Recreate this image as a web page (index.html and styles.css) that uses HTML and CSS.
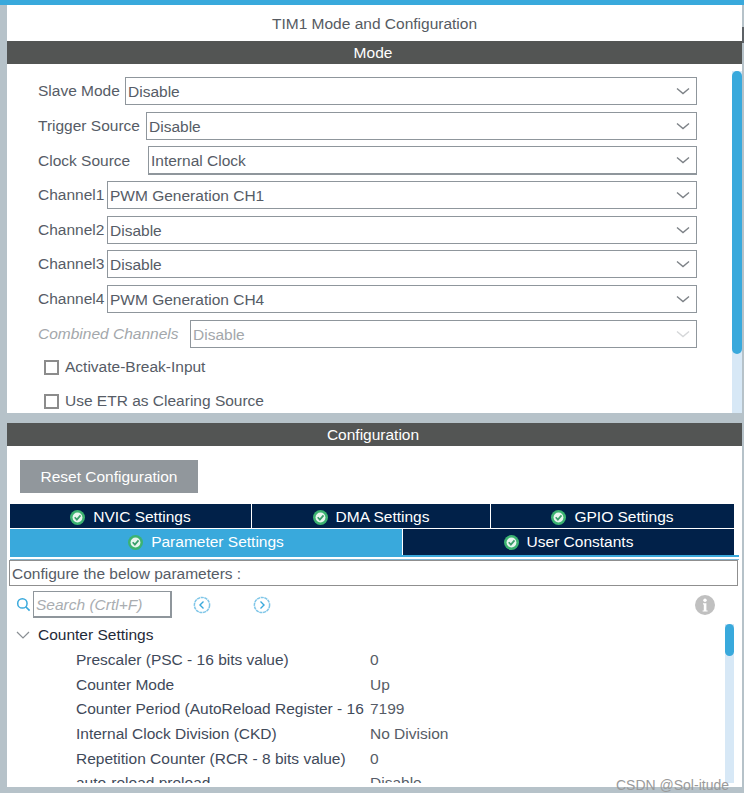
FILE: index.html
```html
<!DOCTYPE html>
<html lang="en">
<head>
<meta charset="utf-8">
<title>TIM1 Mode and Configuration</title>
<link rel="stylesheet" href="styles.css">
</head>
<body>
<svg class="defs" width="0" height="0" aria-hidden="true">
  <symbol id="chev" viewBox="0 0 14 8"><path d="M1 1.5 7 6.5 13 1.5" fill="none" stroke="currentColor" stroke-width="1.4"/></symbol>
  <symbol id="ok" viewBox="0 0 14 14"><circle cx="7" cy="7" r="7" fill="#3cb371"/><circle cx="7" cy="7" r="4.6" fill="#e8f5ee"/><path d="M4.4 6.8 6.4 9 9.8 5" fill="none" stroke="#3a9e6a" stroke-width="1.6"/></symbol>
</svg>
<div class="app">
  <div class="window">
    <h1 class="title">TIM1 Mode and Configuration</h1>
    <h2 class="bar">Mode</h2>
    <section class="mode">
      <div class="mode-list">
        <div class="row r1"><span class="lbl">Slave Mode</span><div class="sel s-slave">Disable<svg class="chev"><use href="#chev"/></svg></div></div>
        <div class="row r2"><span class="lbl">Trigger Source</span><div class="sel s-trig">Disable<svg class="chev"><use href="#chev"/></svg></div></div>
        <div class="row r3"><span class="lbl">Clock Source</span><div class="sel s-clock">Internal Clock<svg class="chev"><use href="#chev"/></svg></div></div>
        <div class="row r4"><span class="lbl">Channel1</span><div class="sel s-ch">PWM Generation CH1<svg class="chev"><use href="#chev"/></svg></div></div>
        <div class="row r5"><span class="lbl">Channel2</span><div class="sel s-ch">Disable<svg class="chev"><use href="#chev"/></svg></div></div>
        <div class="row r6"><span class="lbl">Channel3</span><div class="sel s-ch">Disable<svg class="chev"><use href="#chev"/></svg></div></div>
        <div class="row r7"><span class="lbl">Channel4</span><div class="sel s-ch">PWM Generation CH4<svg class="chev"><use href="#chev"/></svg></div></div>
        <div class="row r8 off"><span class="lbl">Combined Channels</span><div class="sel s-comb">Disable<svg class="chev"><use href="#chev"/></svg></div></div>
        <label class="check c1"><span class="box"></span>Activate-Break-Input</label>
        <label class="check c2"><span class="box"></span>Use ETR as Clearing Source</label>
      </div>
      <div class="track track-mode"><div class="thumb thumb-mode"></div></div>
    </section>
    <div class="gap"></div>
    <h2 class="bar">Configuration</h2>
    <section class="config">
      <div class="reset-wrap"><button class="reset" type="button">Reset Configuration</button></div>
      <div class="tabs t-top">
        <div class="tab t1"><svg class="ok"><use href="#ok"/></svg>NVIC Settings</div>
        <div class="tab t2"><svg class="ok"><use href="#ok"/></svg>DMA Settings</div>
        <div class="tab t3"><svg class="ok"><use href="#ok"/></svg>GPIO Settings</div>
      </div>
      <div class="tabs t-bot">
        <div class="tab active"><svg class="ok"><use href="#ok"/></svg>Parameter Settings</div>
        <div class="tab user"><svg class="ok"><use href="#ok"/></svg>User Constants</div>
      </div>
      <div class="rule"></div>
      <div class="hint">Configure the below parameters :</div>
      <div class="tools">
        <svg class="search-ico" viewBox="0 0 16 16"><circle cx="6.8" cy="6.8" r="5" fill="none" stroke="#39a9dc" stroke-width="1.6"/><path d="M10.4 10.4 14.5 14.5" stroke="#39a9dc" stroke-width="1.8"/></svg>
        <div class="search">Search (Crtl+F)</div>
        <svg class="nav nav-l" viewBox="0 0 18 18"><circle cx="9" cy="9" r="7.6" fill="none" stroke="#7fc6e8" stroke-width="1.5" stroke-dasharray="3.2 .6"/><path d="M10.5 5.6 7 9 10.5 12.4" fill="none" stroke="#39a9dc" stroke-width="1.4"/></svg>
        <svg class="nav nav-r" viewBox="0 0 18 18"><circle cx="9" cy="9" r="7.6" fill="none" stroke="#7fc6e8" stroke-width="1.5" stroke-dasharray="3.2 .6"/><path d="M7.5 5.6 11 9 7.5 12.4" fill="none" stroke="#39a9dc" stroke-width="1.4"/></svg>
        <svg class="info" viewBox="0 0 20 20"><circle cx="10" cy="10" r="10" fill="#c0c0c0"/><circle cx="10" cy="5.2" r="1.7" fill="#fff"/><path d="M8 8.2h3.4v7.2h1.2v1.2H7.6v-1.2h1.2V9.4H8z" fill="#fff"/></svg>
      </div>
      <div class="tree">
        <div class="tree-main">
          <div class="group"><svg class="gchev" viewBox="0 0 14 8"><path d="M1 1 7 7 13 1" fill="none" stroke="#8a8f94" stroke-width="1.2"/></svg>Counter Settings</div>
          <div class="param"><span class="pn">Prescaler (PSC - 16 bits value)</span><span class="pv">0</span></div>
          <div class="param"><span class="pn">Counter Mode</span><span class="pv">Up</span></div>
          <div class="param"><span class="pn">Counter Period (AutoReload Register - 16 bits value)</span><span class="pv">7199</span></div>
          <div class="param"><span class="pn">Internal Clock Division (CKD)</span><span class="pv">No Division</span></div>
          <div class="param"><span class="pn">Repetition Counter (RCR - 8 bits value)</span><span class="pv">0</span></div>
          <div class="param"><span class="pn">auto-reload preload</span><span class="pv">Disable</span></div>
        </div>
        <div class="track track-tree"><div class="thumb thumb-tree"></div></div>
      </div>
      <div class="foot"></div>
    </section>
  </div>
  <div class="mark">CSDN @Sol-itude</div>
</div>
</body>
</html>
```
FILE: styles.css
```css
* { box-sizing: border-box; }
html, body { margin: 0; padding: 0; background: #fff; }
body { width: 744px; height: 800px; overflow: hidden; font-family: "Liberation Sans", Arial, sans-serif; font-size: 15.5px; color: #4f5560; }
.defs { position: absolute; }
.app { position: relative; width: 744px; height: 793px; background: #b6c2c9; border-top: 5px solid #39a9dc; padding: 0 2px 6px 7px; }
.app::after { content: ""; position: absolute; right: 0; top: 22px; width: 2px; height: 16px; background: #5c6166; }
.window { display: flex; flex-direction: column; height: 100%; }
.title { margin: 0; height: 36px; background: #fff; font-weight: 400; font-size: 15.5px; line-height: 37px; text-align: center; color: #565b62; }
.bar { margin: 0; height: 23px; padding-right: 3px; flex: none; background: #535554; color: #fff; font-weight: 400; font-size: 15.5px; line-height: 23px; text-align: center; }
.mode { position: relative; height: 349px; flex: none; background: #fff; display: flex; overflow: hidden; }
.mode-list { flex: 1; padding: 13px 35px 0 31px; }
.row { display: flex; align-items: center; }
.r1, .r4, .r6, .r7 { margin-bottom: 7px; }
.r2, .r3, .r5 { margin-bottom: 6px; }
.lbl { white-space: nowrap; color: #565c66; }
.sel { position: relative; height: 28px; border: 1px solid #8f969c; background: #fff; line-height: 27px; padding-left: 2px; color: #565c66; margin-left: auto; }
.s-slave { width: 572px; }
.s-trig { width: 551px; }
.s-clock { width: 549px; height: 29px; border-bottom-width: 2px; }
.s-ch { width: 590px; }
.s-comb { width: 507px; }
.chev { position: absolute; right: 6px; top: 9px; width: 14px; height: 8px; color: #7d8287; }
.off .lbl { font-style: italic; color: #a3a7ab; }
.off .sel { color: #a3a7ab; }
.off .chev { color: #d5d7d9; }
.check { display: flex; align-items: center; height: 24px; margin-left: 6px; color: #565c66; }
.c1 { margin-top: 7px; margin-bottom: 10px; }
.box { width: 15px; height: 15px; border: 2px solid #8c8c8c; margin-right: 6px; background: #fff; flex: none; }
.track { background: #d7e8f6; flex: none; }
.track-mode { width: 10px; margin: 7px 0 0; }
.thumb { background: #39a9dc; }
.thumb-mode { height: 283px; border-radius: 5px; }
.gap { height: 10px; flex: none; }
.config { flex: 1; min-height: 0; background: #fff; display: flex; flex-direction: column; padding-left: 3px; overflow: hidden; }
.reset-wrap { height: 58px; flex: none; padding: 14px 0 0 10px; }
.reset { display: block; width: 178px; height: 33px; border: 0; background: #91979c; color: #fff; font: 15.5px "Liberation Sans", Arial, sans-serif; padding: 0; }
.tabs { display: flex; height: 24px; flex: none; color: #fff; margin-right: 8px; }
.t-top { margin-bottom: 1px; }
.t-top .tab { padding-top: 2px; }
.tab { background: #012149; display: flex; align-items: center; justify-content: center; }
.t1 { width: 242px; border-right: 1px solid #fff; }
.t2 { width: 239px; border-right: 1px solid #fff; }
.t3 { flex: 1; }
.t-bot { height: 26px; }
.active { width: 393px; background: #39a9dc; border-right: 1px solid #fff; }
.user { flex: 1; }
.ok { width: 15px; height: 15px; margin-right: 8px; flex: none; }
.rule { height: 5px; flex: none; background: linear-gradient(#39a9dc 0 2px, #fff 2px 4px, #7ab6d6 4px); margin-right: 3px; }
.hint { height: 26px; flex: none; border: 1px solid #8f8f8f; line-height: 25px; padding-left: 2px; margin: 0 4px 0 -1px; color: #565c66; }
.tools { position: relative; display: flex; align-items: center; height: 37px; flex: none; padding-left: 6px; }
.search-ico { width: 15px; height: 15px; flex: none; }
.search { width: 139px; height: 27px; margin-left: 2px; border: 1px solid #8f969c; border-bottom-width: 2px; border-right-width: 2px; line-height: 26px; padding-left: 2px; font-style: italic; color: #a9adb1; }
.nav { width: 18px; height: 18px; flex: none; }
.nav-l { margin-left: 21px; }
.nav-r { margin-left: 42px; }
.info { position: absolute; left: 685px; top: 9px; width: 20px; height: 20px; }
.tree { flex: 1; min-height: 0; display: flex; overflow: hidden; }
.tree-main { flex: 1; min-width: 0; overflow: hidden; padding: 0 0 0 6px; }
.group { display: flex; align-items: center; height: 24px; color: #1f2a38; }
.gchev { width: 14px; height: 8px; margin: 0 8px 0 0; }
.param { display: flex; height: 24.7px; line-height: 26px; }
.pn { width: 351px; margin-right: 3px; padding-left: 60px; white-space: nowrap; overflow: hidden; flex: none; color: #3f4a5a; }
.pv { color: #565c66; }
.track-tree { width: 9px; margin: 1px 8px 0 0; }
.thumb-tree { height: 32px; border-radius: 5px; }
.foot { height: 4px; flex: none; }
.mark { position: absolute; right: 15px; bottom: 0; font-size: 14px; color: #9a9a9a; }
```
